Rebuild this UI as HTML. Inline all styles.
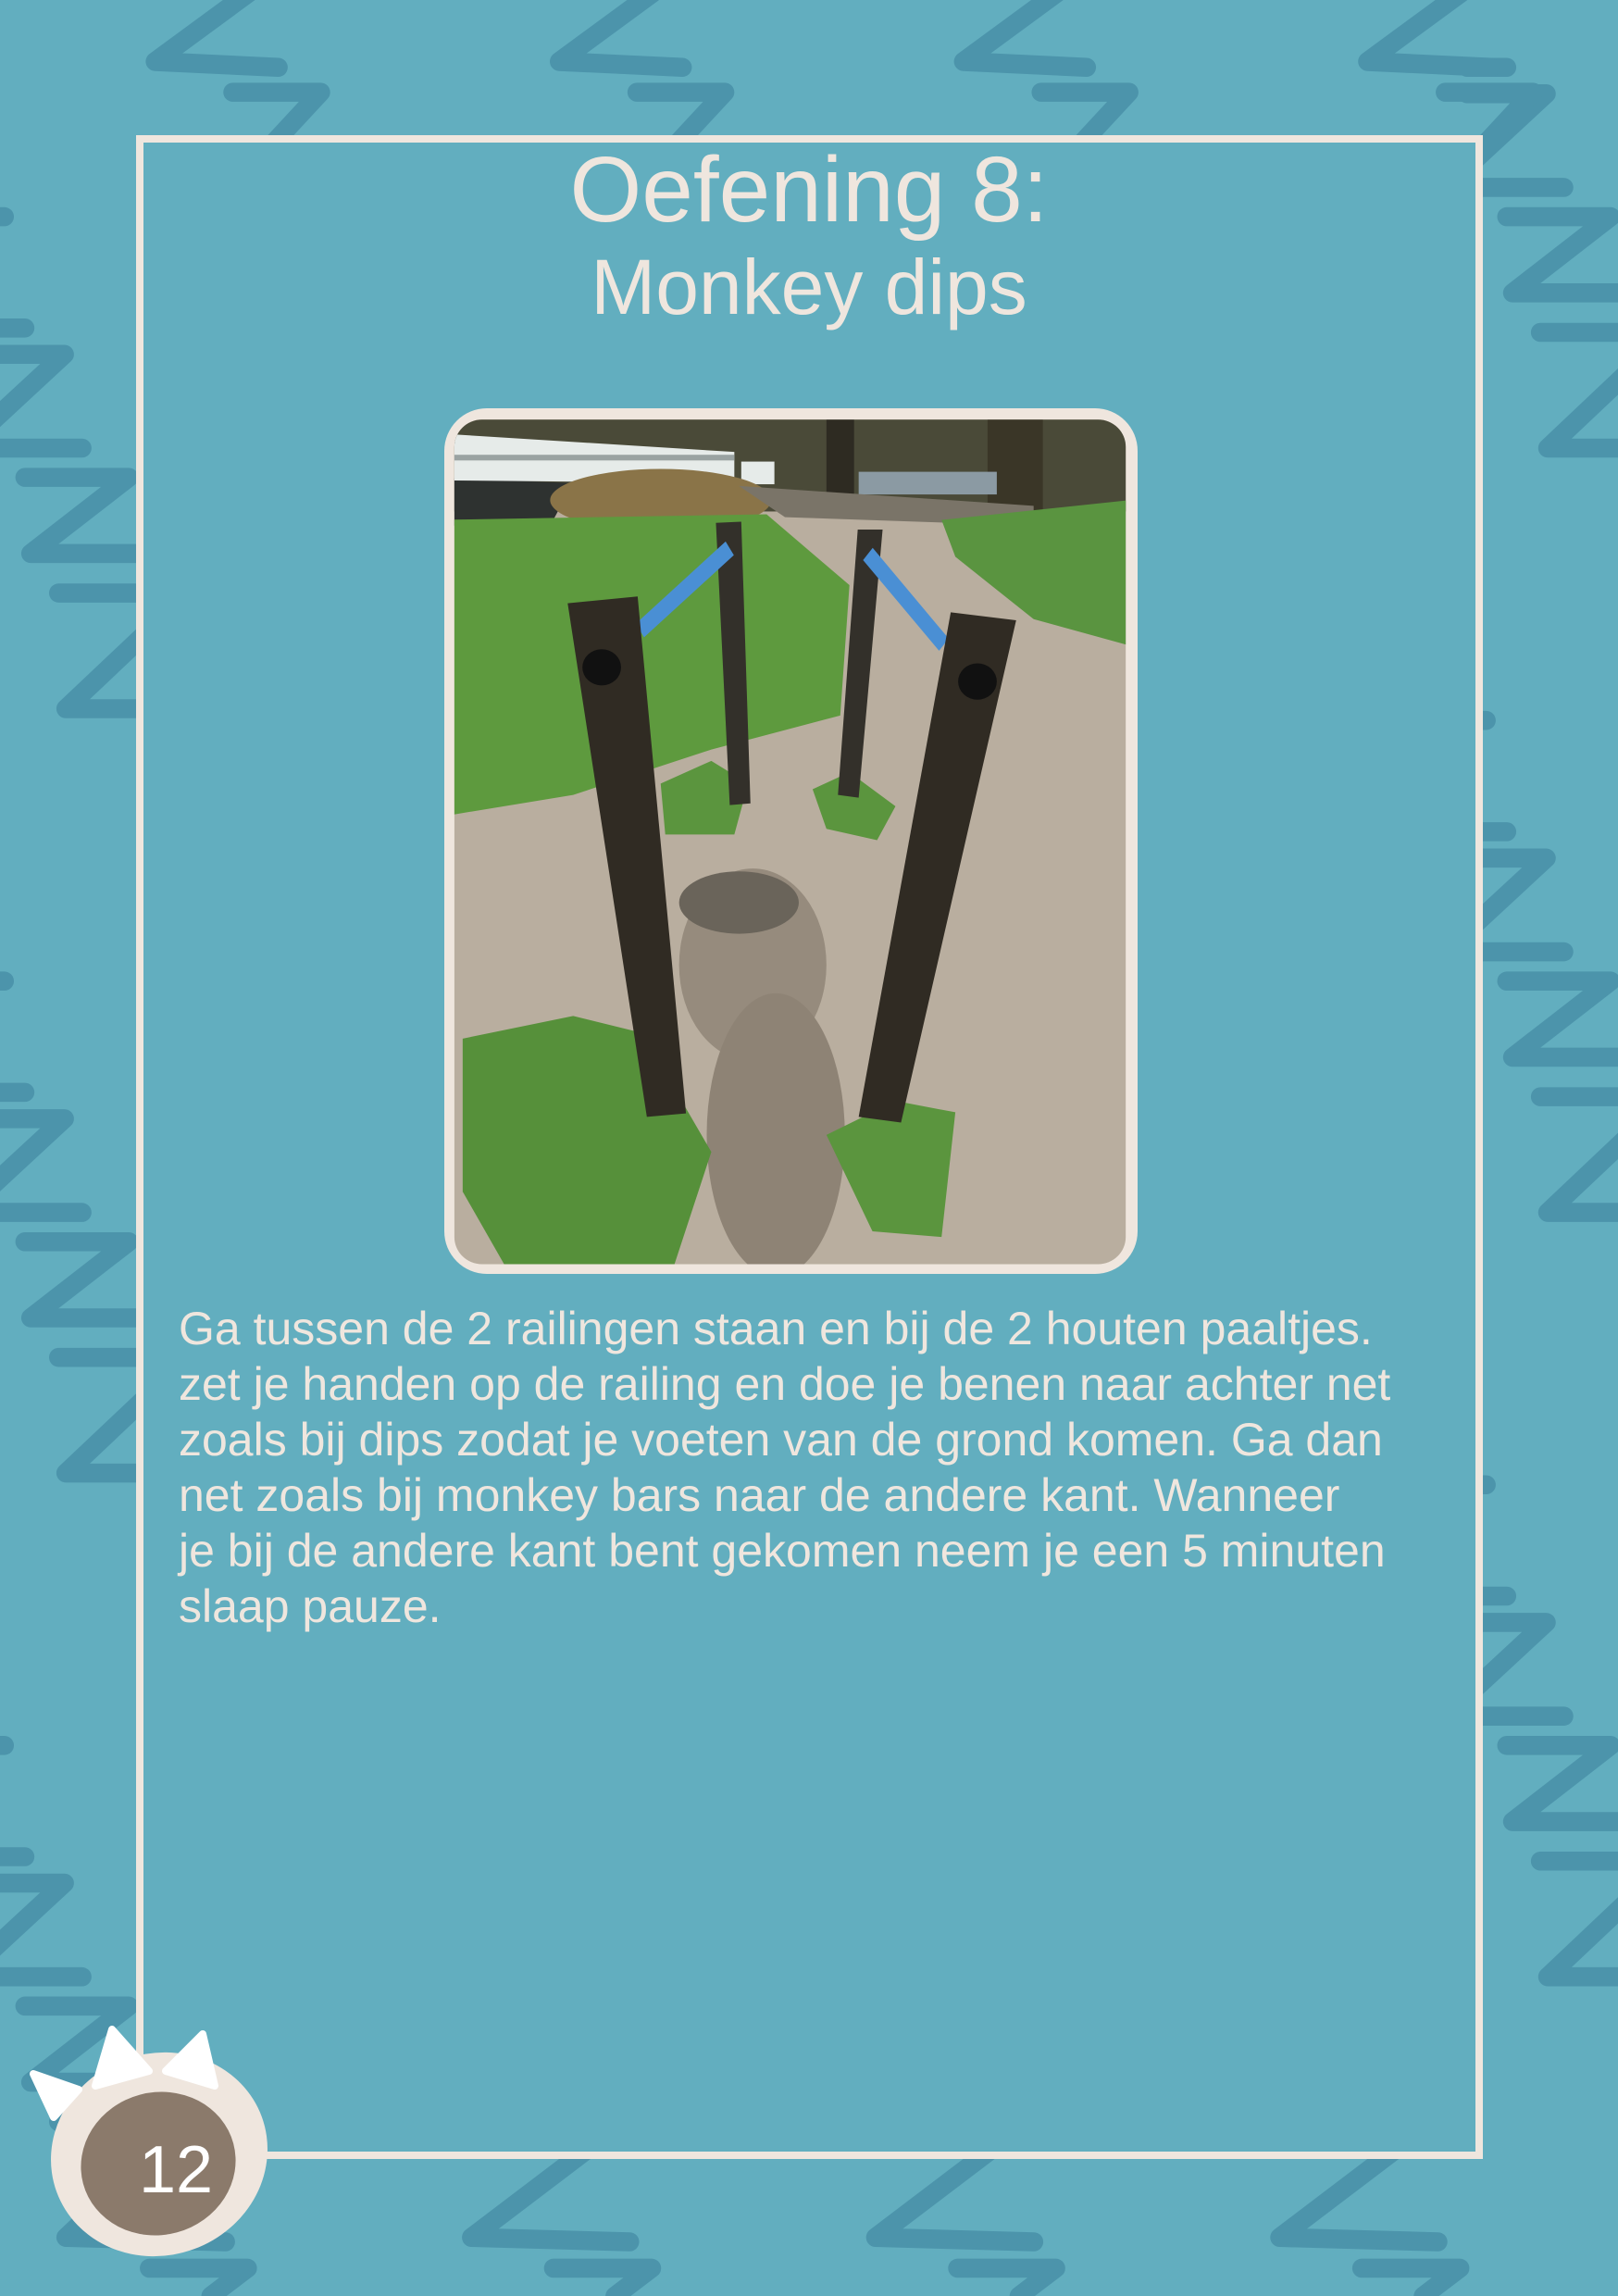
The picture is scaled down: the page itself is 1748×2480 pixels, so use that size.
<!DOCTYPE html>
<html><head><meta charset="utf-8"><style>
html,body{margin:0;padding:0}
body{width:1748px;height:2480px;position:relative;overflow:hidden;background:#62AEBF;font-family:"Liberation Sans",Arial,sans-serif}
.abs{position:absolute}
.frame{left:147px;top:146px;width:1455px;height:2186px;box-sizing:border-box;border:8px solid #EFE6DE;background:#62AEBF}
.t{position:absolute;left:0;width:1748px;text-align:center;color:#EFE6DE;white-space:nowrap;line-height:1}
.line{position:absolute;left:193px;color:#EFE6DE;font-size:50px;white-space:nowrap;line-height:1}
</style></head><body>
<svg class="abs" style="left:0;top:0" width="1748" height="2480" viewBox="0 0 1105 1568" preserveAspectRatio="none">
<defs>
<g id="side" fill="none" stroke="#4C94AB" stroke-width="13" stroke-linecap="round" stroke-linejoin="round">
<path d="M-10,148 L3,148 M-10,224 L17,224 M-10,242 L44,242 L-10,292 M-10,306 L56,306 M17,326 L88,326 L21,378 L100,378 M40,405 L100,405 M100,432 L45,484 L100,484"/>
</g>
<g id="top" fill="none" stroke="#4C94AB" stroke-width="13" stroke-linecap="round" stroke-linejoin="round">
<path d="M170,-5 L106,42 L190,46 M159,63 L219,63 L180,105"/>
</g>
<g id="bot" fill="none" stroke="#4C94AB" stroke-width="13" stroke-linecap="round" stroke-linejoin="round">
<path d="M405,1465 L322,1528 L430,1531 M378,1549 L445,1549 L420,1568"/>
</g>
</defs>
<use href="#side"/><use href="#side" y="522"/><use href="#side" y="1044"/>
<use href="#side" x="1012" y="-178"/><use href="#side" x="1012" y="344"/><use href="#side" x="1012" y="866"/>
<use href="#top"/><use href="#top" x="276"/><use href="#top" x="552"/><use href="#top" x="828"/>
<use href="#bot" x="-276"/><use href="#bot"/><use href="#bot" x="276"/><use href="#bot" x="552"/>
</svg>
<div class="abs frame"></div>
<div class="t" style="top:155px;font-size:100px">Oefening 8:</div>
<div class="t" style="top:268px;font-size:84px">Monkey dips</div>

<div class="abs" style="left:480px;top:441px;width:749px;height:935px;background:#EFE6DE;border-radius:46px"></div>
<svg class="abs" style="left:470px;top:430px" width="780" height="960" viewBox="0 0 1568 1568" preserveAspectRatio="none">
<defs><clipPath id="c"><rect x="42" y="38" width="1458" height="1490" rx="60" ry="48"/></clipPath></defs>
<g clip-path="url(#c)">
<rect x="0" y="0" width="1568" height="1568" fill="#b9ae9f"/>
<rect x="0" y="0" width="1568" height="200" fill="#4a4a38"/>
<rect x="850" y="38" width="60" height="140" fill="#2e2b22"/>
<rect x="1200" y="38" width="120" height="160" fill="#3a3627"/>
<rect x="920" y="130" width="300" height="40" fill="#8b9aa3"/>
<polygon points="0,140 300,150 250,225 0,225" fill="#2e3230"/>
<polygon points="0,62 650,95 650,150 0,145" fill="#e6ebe9"/>
<rect x="0" y="100" width="650" height="10" fill="#9aa3a2"/>
<rect x="665" y="112" width="72" height="40" fill="#e6ebe9"/>
<ellipse cx="490" cy="180" rx="240" ry="55" fill="#8a7448"/>
<polygon points="660,155 1300,190 1300,225 760,210" fill="#7a7468"/>
<polygon points="0,215 720,205 900,330 880,560 600,620 300,700 0,740" fill="#5e9a3e"/>
<polygon points="1100,215 1568,175 1568,450 1300,390 1130,280" fill="#5a9440"/>
<ellipse cx="690" cy="1000" rx="160" ry="170" fill="#968b7d"/>
<ellipse cx="740" cy="1300" rx="150" ry="250" fill="#8e8375"/>
<ellipse cx="660" cy="890" rx="130" ry="55" fill="#6a645a"/>
<polygon points="60,1130 300,1090 450,1120 600,1330 520,1528 150,1528 60,1400" fill="#56903a"/>
<polygon points="850,1300 1000,1240 1130,1260 1100,1480 950,1470" fill="#5b953e"/>
<polygon points="490,680 600,640 680,680 650,770 500,770" fill="#5b953e"/>
<polygon points="820,690 900,660 1000,720 960,780 850,760" fill="#5b953e"/>
<polygon points="610,220 665,218 685,715 640,718" fill="#33302a"/>
<polygon points="918,232 972,232 920,705 875,700" fill="#33302a"/>
<line x1="445" y1="410" x2="640" y2="265" stroke="#4a8fd4" stroke-width="30"/>
<line x1="940" y1="275" x2="1105" y2="435" stroke="#4a8fd4" stroke-width="30"/>
<polygon points="288,362 440,350 545,1262 460,1268" fill="#302b23"/>
<polygon points="1120,378 1262,392 1012,1278 920,1268" fill="#302b23"/>
<ellipse cx="362" cy="475" rx="42" ry="32" fill="#111"/>
<ellipse cx="1178" cy="500" rx="42" ry="32" fill="#111"/>
</g>
</svg>

<div class="line" style="top:1410px">Ga tussen de 2 railingen staan en bij de 2 houten paaltjes.</div>
<div class="line" style="top:1470px">zet je handen op de railing en doe je benen naar achter net</div>
<div class="line" style="top:1530px">zoals bij dips zodat je voeten van de grond komen. Ga dan</div>
<div class="line" style="top:1590px">net zoals bij monkey bars naar de andere kant. Wanneer</div>
<div class="line" style="top:1650px">je bij de andere kant bent gekomen neem je een 5 minuten</div>
<div class="line" style="top:1710px">slaap pauze.</div>

<svg class="abs" style="left:0;top:2150px" width="320" height="330" viewBox="0 2150 320 330">
<ellipse cx="172" cy="2327" rx="118" ry="109" fill="#EFE6DE" transform="rotate(-20 172 2327)"/>
<ellipse cx="171" cy="2337" rx="84" ry="77" fill="#8B7A6B" transform="rotate(-15 171 2337)"/>
<polygon points="36,2240 85,2257 58,2287" fill="#fff" stroke="#fff" stroke-width="8" stroke-linejoin="round"/>
<polygon points="121,2192 161,2237 103,2253" fill="#fff" stroke="#fff" stroke-width="8" stroke-linejoin="round"/>
<polygon points="219,2197 232,2253 179,2237" fill="#fff" stroke="#fff" stroke-width="8" stroke-linejoin="round"/>
<text x="190" y="2368" text-anchor="middle" font-family="Liberation Sans, Arial, sans-serif" font-size="72" fill="#fff">12</text>
</svg>
</body></html>
